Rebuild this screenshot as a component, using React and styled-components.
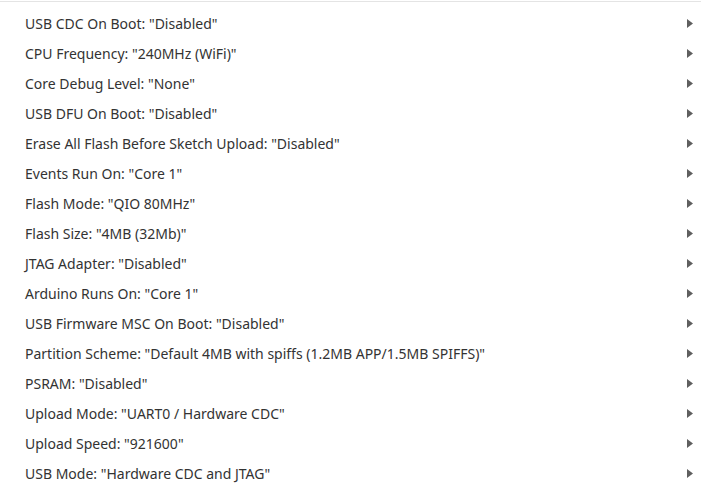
import React from "react";
import styled, { createGlobalStyle } from "styled-components";

const Global = createGlobalStyle`
  html, body { margin: 0; padding: 0; background: #ffffff; }
  body { font-family: "Segoe UI", "Noto Sans", sans-serif; }
`;

const Menu = styled.div`
  margin-top: 1px;
  border-top: 1px solid #e4e4e4;
  padding-top: 6px;
  display: flex;
  flex-direction: column;
`;

const Row = styled.div`
  height: 30px;
  display: flex;
  align-items: center;
  justify-content: space-between;
  padding: 0 8px 0 25px;
  font-size: 14px;
  color: #333333;
`;

const Label = styled.span`
  white-space: nowrap;
`;

const Arrow = styled.svg`
  width: 6px;
  height: 9px;
  flex: none;
`;

const items = [
  'USB CDC On Boot: "Disabled"',
  'CPU Frequency: "240MHz (WiFi)"',
  'Core Debug Level: "None"',
  'USB DFU On Boot: "Disabled"',
  'Erase All Flash Before Sketch Upload: "Disabled"',
  'Events Run On: "Core 1"',
  'Flash Mode: "QIO 80MHz"',
  'Flash Size: "4MB (32Mb)"',
  'JTAG Adapter: "Disabled"',
  'Arduino Runs On: "Core 1"',
  'USB Firmware MSC On Boot: "Disabled"',
  'Partition Scheme: "Default 4MB with spiffs (1.2MB APP/1.5MB SPIFFS)"',
  'PSRAM: "Disabled"',
  'Upload Mode: "UART0 / Hardware CDC"',
  'Upload Speed: "921600"',
  'USB Mode: "Hardware CDC and JTAG"',
];

export default function App() {
  return (
    <>
      <Global />
      <Menu>
        {items.map((t) => (
          <Row key={t}>
            <Label>{t}</Label>
            <Arrow viewBox="0 0 6 9">
              <path d="M0 0 L6 4.5 L0 9 Z" fill="#5f5f5f" />
            </Arrow>
          </Row>
        ))}
      </Menu>
    </>
  );
}
